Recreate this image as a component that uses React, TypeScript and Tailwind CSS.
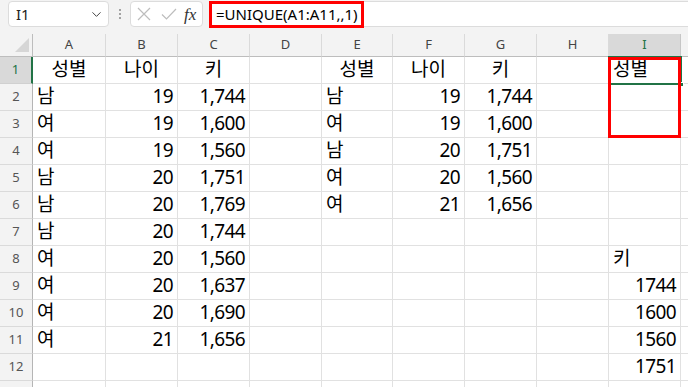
import { ChevronDown } from "lucide-react";

const COLS = ["A", "B", "C", "D", "E", "F", "G", "H", "I"];

type Cell = { v: string; align?: "l" | "r" | "c" };

const L = (v: string): Cell => ({ v, align: "l" });
const R = (v: string): Cell => ({ v, align: "r" });
const C = (v: string): Cell => ({ v, align: "c" });
const E: Cell = { v: "" };

const rows: Cell[][] = [
  [C("성별"), C("나이"), C("키"), E, C("성별"), C("나이"), C("키"), E, L("성별")],
  [L("남"), R("19"), R("1,744"), E, L("남"), R("19"), R("1,744"), E, E],
  [L("여"), R("19"), R("1,600"), E, L("여"), R("19"), R("1,600"), E, E],
  [L("여"), R("19"), R("1,560"), E, L("남"), R("20"), R("1,751"), E, E],
  [L("남"), R("20"), R("1,751"), E, L("여"), R("20"), R("1,560"), E, E],
  [L("남"), R("20"), R("1,769"), E, L("여"), R("21"), R("1,656"), E, E],
  [L("남"), R("20"), R("1,744"), E, E, E, E, E, E],
  [L("여"), R("20"), R("1,560"), E, E, E, E, E, L("키")],
  [L("여"), R("20"), R("1,637"), E, E, E, E, E, R("1744")],
  [L("여"), R("20"), R("1,690"), E, E, E, E, E, R("1600")],
  [L("여"), R("21"), R("1,656"), E, E, E, E, E, R("1560")],
  [E, E, E, E, E, E, E, E, R("1751")],
  [E, E, E, E, E, E, E, E, E],
];

function DataCell({ cell }: { cell: Cell }) {
  const align =
    cell.align === "r"
      ? "justify-end pr-[4px] tracking-[-0.6px]"
      : cell.align === "c"
      ? "justify-center"
      : "justify-start pl-[4px]";
  return (
    <div
      className={`flex h-[27px] items-end overflow-hidden whitespace-nowrap border-r border-b border-[#e1e1e1] pb-[4px] text-[19px] leading-[19px] text-black ${align}`}
    >
      {cell.v}
    </div>
  );
}

export default function App() {
  return (
    <div
      className="h-[387px] w-[688px] overflow-hidden bg-[#f3f3f3]"
      style={{ fontFamily: '"Noto Sans", "Noto Sans CJK KR", sans-serif' }}
    >
      {/* formula bar */}
      <div className="flex h-[34px] items-start pt-[1px]">
        <div className="ml-[8px] flex h-[26px] w-[101px] items-center justify-between rounded-[4px] border border-[#dcdcdc] bg-white pl-[7px] pr-[4px] text-[15px] text-[#222]">
          <span>I1</span>
          <ChevronDown size={15} strokeWidth={1.6} className="text-[#444]" />
        </div>
        <div className="flex h-[26px] w-[21px] flex-col items-center justify-center gap-[2px]">
          <span className="h-[2px] w-[2px] rounded-full bg-[#888]" />
          <span className="h-[2px] w-[2px] rounded-full bg-[#888]" />
          <span className="h-[2px] w-[2px] rounded-full bg-[#888]" />
        </div>
        <div className="flex h-[26px] w-[73px] items-center rounded-[4px] border border-[#dcdcdc] bg-white pl-[6px]">
          <svg width="14" height="14" viewBox="0 0 14 14" className="mr-[10px]">
            <path d="M1 1L13 13M13 1L1 13" stroke="#bdbdbd" strokeWidth="1.2" fill="none" />
          </svg>
          <svg width="16" height="12" viewBox="0 0 16 12" className="mr-[7px]">
            <path d="M1 6.5L5.5 11L15 1" stroke="#bdbdbd" strokeWidth="1.2" fill="none" />
          </svg>
          <span
            className="text-[17px] italic leading-none text-[#333]"
            style={{ fontFamily: '"Liberation Serif", serif' }}
          >
            fx
          </span>
        </div>
        <div className="ml-[6px] flex h-[26px] flex-1 items-center rounded-l-[4px] border border-r-0 border-[#dcdcdc] bg-white">
          <span className="-ml-[1px] flex h-[27px] items-center border-[3px] border-[#ff0000] pl-[4px] pr-[3px] text-[15px] text-black">
            =UNIQUE(A1:A11,,1)
          </span>
        </div>
      </div>

      {/* sheet */}
      <div className="relative grid grid-cols-[33px_73px_72px_72px_72px_71px_72px_72px_72px_72px_1fr] grid-rows-[23px]">
        {/* header row */}
        <div className="relative h-[23px] border-r border-b border-[#bdbdbd] bg-[#f3f3f3]">
          <svg width="14" height="14" viewBox="0 0 14 14" className="absolute right-[3px] bottom-[4px]">
            <path d="M14 0L14 14L0 14Z" fill="#d6d6d6" />
          </svg>
        </div>
        {COLS.map((c) => (
          <div
            key={c}
            className={`flex h-[23px] items-center justify-center border-b border-r text-[13px] ${
              c === "I"
                ? "border-b-[#217346] border-r-[#c6c6c6] bg-[#d9d9d9] text-[#217346]"
                : "border-b-[#bdbdbd] border-r-[#dadada] bg-[#f3f3f3] text-[#444]"
            }`}
          >
            {c}
          </div>
        ))}
        <div className="h-[23px] border-b border-[#bdbdbd] bg-[#f3f3f3]" />

        {rows.map((r, i) => (
          <div key={i} className="contents">
            <div
              className={`flex h-[27px] items-center justify-center border-b text-[13px] ${
                i === 0
                  ? "border-r-2 border-r-[#217346] border-b-[#d0d0d0] bg-[#d9d9d9] text-[#217346]"
                  : "border-r border-r-[#b5b5b5] border-b-[#dadada] bg-[#f3f3f3] text-[#555]"
              }`}
            >
              {i < 12 ? i + 1 : ""}
            </div>
            {r.map((cell, j) => (
              <div key={j} className="bg-white">
                <DataCell cell={cell} />
              </div>
            ))}
            <div className="h-[27px] border-b border-[#e1e1e1] bg-white" />
          </div>
        ))}

        {/* active cell I1 */}
        <div className="absolute left-[608px] top-[22px] h-[29px] w-[74px] border-2 border-[#217346]" />
        <div className="absolute left-[679px] top-[48px] h-[5px] w-[5px] border border-white bg-[#217346]" />
        {/* red annotation */}
        <div className="absolute left-[608px] top-[23px] h-[81px] w-[73px] border-[3px] border-[#ff0000]" />
      </div>
    </div>
  );
}
